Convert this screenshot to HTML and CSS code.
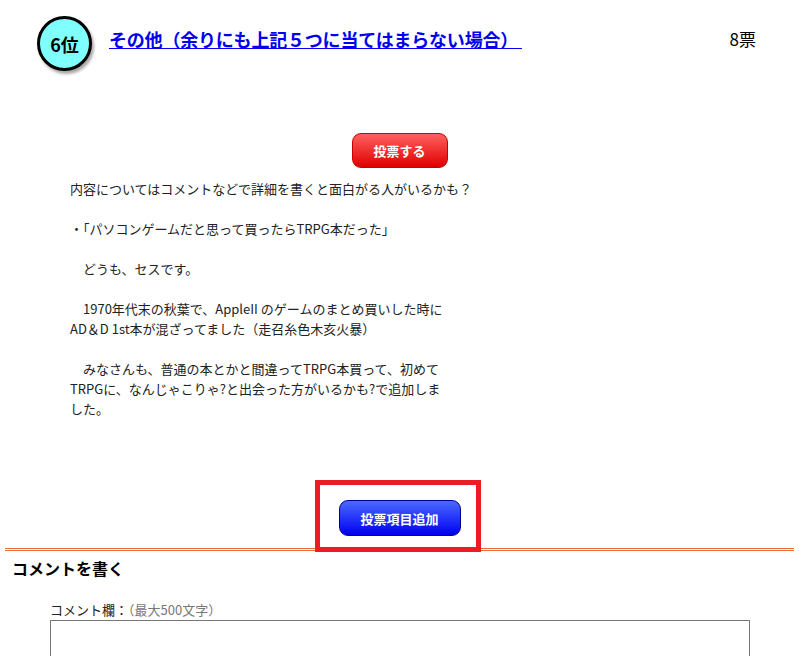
FILE: index.html
```html
<!DOCTYPE html>
<html lang="ja">
<head>
    <meta charset="UTF-8">
    <meta name="viewport" content="width=device-width, initial-scale=1.0">
    <title>投票項目</title>
    <link rel="stylesheet" href="styles.css">
</head>
<body>
    <div class="rank-row">
        <div class="rank-badge">6位</div>
        <a class="rank-title" href="#">その他（余りにも上記５つに当てはまらない場合）&nbsp;</a>
        <div class="rank-votes">8票</div>
    </div>

    <div class="vote-area">
        <button class="btn btn-red">投票する</button>
    </div>

    <div class="desc">
        内容についてはコメントなどで詳細を書くと面白がる人がいるかも？<br>
        <br>
        ・「パソコンゲームだと思って買ったらTRPG本だった」<br>
        <br>
        　どうも、セスです。<br>
        <br>
        　1970年代末の秋葉で、AppleII のゲームのまとめ買いした時に<br>
        AD＆D 1st本が混ざってました（走召糸色木亥火暴）<br>
        <br>
        　みなさんも、普通の本とかと間違ってTRPG本買って、初めて<br>
        TRPGに、なんじゃこりゃ?と出会った方がいるかも?で追加しま<br>
        した。
    </div>

    <div class="add-area">
        <button class="btn btn-blue">投票項目追加</button>
        <div class="mark-box"></div>
    </div>

    <div class="divider"></div>

    <h2 class="comment-head">コメントを書く</h2>
    <div class="comment-form">
        <label class="comment-label">コメント欄：<span class="comment-note">（最大500文字）</span></label>
        <textarea class="comment-box"></textarea>
    </div>
</body>
</html>
```

FILE: styles.css
```css
body {
    margin: 0;
    font-family: "Noto Sans CJK JP", "Noto Sans", sans-serif;
    color: #222;
    background: #fff;
}
.rank-row {
    display: flex;
    align-items: center;
    padding: 16px 43px 0 37px;
}
.rank-badge {
    width: 49px;
    height: 49px;
    border: 3px solid #000;
    border-radius: 50%;
    background: #80ffff;
    box-shadow: 2px 3px 3px rgba(0, 0, 0, 0.35);
    display: flex;
    justify-content: center;
    align-items: center;
    font-size: 18px;
    font-weight: bold;
    color: #000;
    line-height: 1;
}
.rank-title {
    flex: 1;
    margin-left: 17px;
    margin-top: -10px;
    font-size: 18px;
    font-weight: bold;
    line-height: 24px;
    color: #0000ee;
    text-decoration: underline;
    letter-spacing: -0.2px;
}
.rank-votes {
    margin-top: -11px;
    font-size: 17px;
    color: #000;
}
.vote-area {
    padding-top: 62px;
    text-align: center;
}
.btn {
    display: inline-block;
    height: 35px;
    border-radius: 9px;
    font-family: inherit;
    font-size: 13px;
    font-weight: bold;
    color: #fff;
    cursor: pointer;
    padding: 0;
}
.btn-red {
    width: 96px;
    border: 1px solid #c80000;
    background: linear-gradient(#ff6060, #e00000);
}
.btn-blue {
    width: 122px;
    height: 36px;
    border: 1px solid #000090;
    background: linear-gradient(#4a6aff, #0000f0);
}
.desc {
    padding: 11px 0 0 70px;
    font-size: 13px;
    line-height: 20px;
    color: #222;
}
.add-area {
    position: relative;
    padding-top: 81px;
    text-align: center;
}
.mark-box {
    position: absolute;
    left: 315px;
    top: 61px;
    width: 156px;
    height: 62px;
    border: 5px solid #ec1c24;
}
.divider {
    margin: 12px 5px 0;
    height: 1px;
    border-top: 1px solid #e96f3a;
    border-bottom: 1px solid #e96f3a;
}
.comment-head {
    margin: 0;
    padding: 4px 12px 0;
    font-size: 16px;
    font-weight: bold;
    line-height: 26px;
    color: #000;
}
.comment-form {
    padding: 20px 0 0 50px;
}
.comment-label {
    display: block;
    font-size: 13px;
    line-height: 18px;
    color: #222;
}
.comment-note {
    font-size: 13px;
    color: #777;
}
.comment-box {
    display: block;
    width: 696px;
    height: 80px;
    margin-top: 1px;
    border: 1px solid #767676;
    padding: 1px;
    resize: none;
}
```
